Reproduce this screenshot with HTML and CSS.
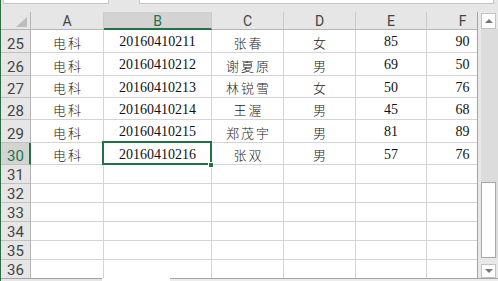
FILE: index.html
```html
<!DOCTYPE html>
<html lang="zh-CN">
<head>
<meta charset="utf-8">
<title>Sheet</title>
<link rel="stylesheet" href="styles.css">
</head>
<body>
<div class="app">
  <div class="topbar">
    <div class="namebox"></div>
    <div class="formula"></div>
  </div>
  <div class="main">
    <div class="sheet">
      <div class="grid">
        <div class="corner"><span class="tri"></span></div>
        <div class="ch">A</div>
        <div class="ch sel">B</div>
        <div class="ch">C</div>
        <div class="ch">D</div>
        <div class="ch">E</div>
        <div class="ch">F</div>

        <div class="rh r23">25</div>
        <div class="c zh">电科</div><div class="c num">20160410211</div><div class="c zh">张春</div><div class="c zh">女</div><div class="c num">85</div><div class="c num">90</div>

        <div class="rh r23">26</div>
        <div class="c zh">电科</div><div class="c num">20160410212</div><div class="c zh">谢夏原</div><div class="c zh">男</div><div class="c num">69</div><div class="c num">50</div>

        <div class="rh">27</div>
        <div class="c zh">电科</div><div class="c num">20160410213</div><div class="c zh">林锐雪</div><div class="c zh">女</div><div class="c num">50</div><div class="c num">76</div>

        <div class="rh">28</div>
        <div class="c zh">电科</div><div class="c num">20160410214</div><div class="c zh">王渥</div><div class="c zh">男</div><div class="c num">45</div><div class="c num">68</div>

        <div class="rh">29</div>
        <div class="c zh">电科</div><div class="c num">20160410215</div><div class="c zh">郑茂宇</div><div class="c zh">男</div><div class="c num">81</div><div class="c num">89</div>

        <div class="rh sel">30</div>
        <div class="c zh">电科</div><div class="c num active">20160410216<span class="handle"></span></div><div class="c zh">张双</div><div class="c zh">男</div><div class="c num">57</div><div class="c num">76</div>

        <div class="rh">31</div><div class="c"></div><div class="c"></div><div class="c"></div><div class="c"></div><div class="c"></div><div class="c"></div>
        <div class="rh">32</div><div class="c"></div><div class="c"></div><div class="c"></div><div class="c"></div><div class="c"></div><div class="c"></div>
        <div class="rh">33</div><div class="c"></div><div class="c"></div><div class="c"></div><div class="c"></div><div class="c"></div><div class="c"></div>
        <div class="rh">34</div><div class="c"></div><div class="c"></div><div class="c"></div><div class="c"></div><div class="c"></div><div class="c"></div>
        <div class="rh">35</div><div class="c"></div><div class="c"></div><div class="c"></div><div class="c"></div><div class="c"></div><div class="c"></div>
        <div class="rh">36</div><div class="c"></div><div class="c"></div><div class="c"></div><div class="c"></div><div class="c"></div><div class="c"></div>
      </div>
    </div>
    <div class="vscroll">
      <div class="btn up"><span class="arr-up"></span></div>
      <div class="track">
        <div class="thumb"></div>
      </div>
      <div class="btn down"><span class="arr-down"></span></div>
    </div>
  </div>
  <div class="bottom">
    <div class="tabs"></div>
    <div class="gap"></div>
    <div class="hscroll"></div>
  </div>
</div>
</body>
</html>
```

FILE: styles.css
```css
* { box-sizing: border-box; }
html, body { margin: 0; padding: 0; background: #fff; }
body { width: 498px; height: 281px; overflow: hidden; }

.app {
  width: 498px;
  height: 281px;
  border-left: 1px solid #2f6b47;
  display: flex;
  flex-direction: column;
  background: #e6e6e6;
}

.topbar {
  height: 12px;
  flex: none;
  display: flex;
  align-items: flex-start;
  background: #e6e6e6;
}
.namebox {
  margin-left: 2px;
  width: 106px;
  height: 4px;
  background: #fff;
  border: 1px solid #c6c6c6;
  border-top: none;
}
.formula {
  margin-left: 30px;
  width: 355px;
  height: 4px;
  background: #fff;
  border: 1px solid #c6c6c6;
  border-top: none;
}

.main {
  height: 266px;
  flex: none;
  display: flex;
}

.sheet {
  width: 477px;
  height: 266px;
  overflow: hidden;
  border-right: 1px solid #a3a3a3;
  background: #fff;
}

.grid {
  display: grid;
  grid-template-columns: 30px 73px 108px 72px 72px 71px 72px;
  grid-template-rows: 18px 23px 23px 22px 22px 23px 22px repeat(6, 19px);
  width: 498px;
}

.corner {
  background: #e6e6e6;
  border-right: 1px solid #b4b4b4;
  border-bottom: 1px solid #b4b4b4;
  position: relative;
}
.tri {
  position: absolute;
  right: 3px;
  bottom: 2px;
  width: 0;
  height: 0;
  border-left: 11px solid transparent;
  border-bottom: 10px solid #bdbdbd;
}

.ch {
  background: #e6e6e6;
  border-right: 1px solid #cacaca;
  border-bottom: 1px solid #b4b4b4;
  font-family: Roboto, "Liberation Sans", sans-serif;
  font-size: 14px;
  line-height: 14px;
  color: #444;
  display: flex;
  align-items: flex-end;
  justify-content: center;
  padding-bottom: 1px;
}
.ch.sel {
  background: #d3d3d3;
  color: #217346;
  border-bottom: 2px solid #217346;
  padding-bottom: 0;
}

.rh {
  background: #e6e6e6;
  border-right: 1px solid #b4b4b4;
  border-bottom: 1px solid #c0c0c0;
  font-family: Roboto, "Liberation Sans", sans-serif;
  font-size: 15px;
  line-height: 15px;
  color: #444;
  display: flex;
  align-items: flex-end;
  padding-left: 6px;
  padding-bottom: 0;
}
.rh.sel {
  background: #d3d3d3;
  color: #217346;
  border-right: 2px solid #217346;
}

.c {
  border-right: 1px solid #d4d4d4;
  border-bottom: 1px solid #d4d4d4;
  display: flex;
  align-items: center;
  justify-content: center;
  padding-top: 2px;
  color: #111;
  white-space: nowrap;
  position: relative;
}
.c.num {
  font-family: "Liberation Serif", serif;
  font-size: 14px;
}
.c.zh {
  font-family: "Noto Sans CJK SC", sans-serif;
  font-size: 13px;
  font-weight: 300;
  letter-spacing: 2px;
  padding-left: 2px;
  color: #222;
}

.c.active::after {
  content: "";
  position: absolute;
  left: -2px;
  top: -2px;
  right: -1px;
  bottom: -1px;
  border: 2px solid #217346;
}
.handle {
  position: absolute;
  right: -3px;
  bottom: -4px;
  width: 6px;
  height: 6px;
  background: #217346;
  border: 1px solid #fff;
  z-index: 2;
}

.vscroll {
  width: 20px;
  height: 266px;
  background: #e8e8e8;
  display: flex;
  flex-direction: column;
  padding: 1px 2px 0 3px;
}
.btn {
  width: 15px;
  background: #fff;
  border: 1px solid #c2c2c2;
  display: flex;
  align-items: center;
  justify-content: center;
  flex: none;
}
.btn.up { height: 16px; }
.btn.down { height: 14px; margin-top: 6px; }
.arr-up {
  width: 0; height: 0;
  border-left: 4px solid transparent;
  border-right: 4px solid transparent;
  border-bottom: 4px solid #777;
}
.arr-down {
  width: 0; height: 0;
  border-left: 4px solid transparent;
  border-right: 4px solid transparent;
  border-top: 4px solid #777;
}
.track {
  flex: 1;
  background: #dcdcdc;
  margin: 0 -2px 0 0;
  padding-top: 153px;
}
.thumb {
  width: 15px;
  height: 76px;
  background: #fff;
  border: 1px solid #a8a8a8;
}

.bottom {
  height: 3px;
  flex: none;
  display: flex;
}
.tabs {
  width: 101px;
  background: #e6e6e6;
  border-top: 1px solid #a3a3a3;
}
.gap {
  width: 68px;
  background: #fff;
}
.hscroll {
  flex: 1;
  background: #ececec;
  border-top: 1px solid #a3a3a3;
}
```
